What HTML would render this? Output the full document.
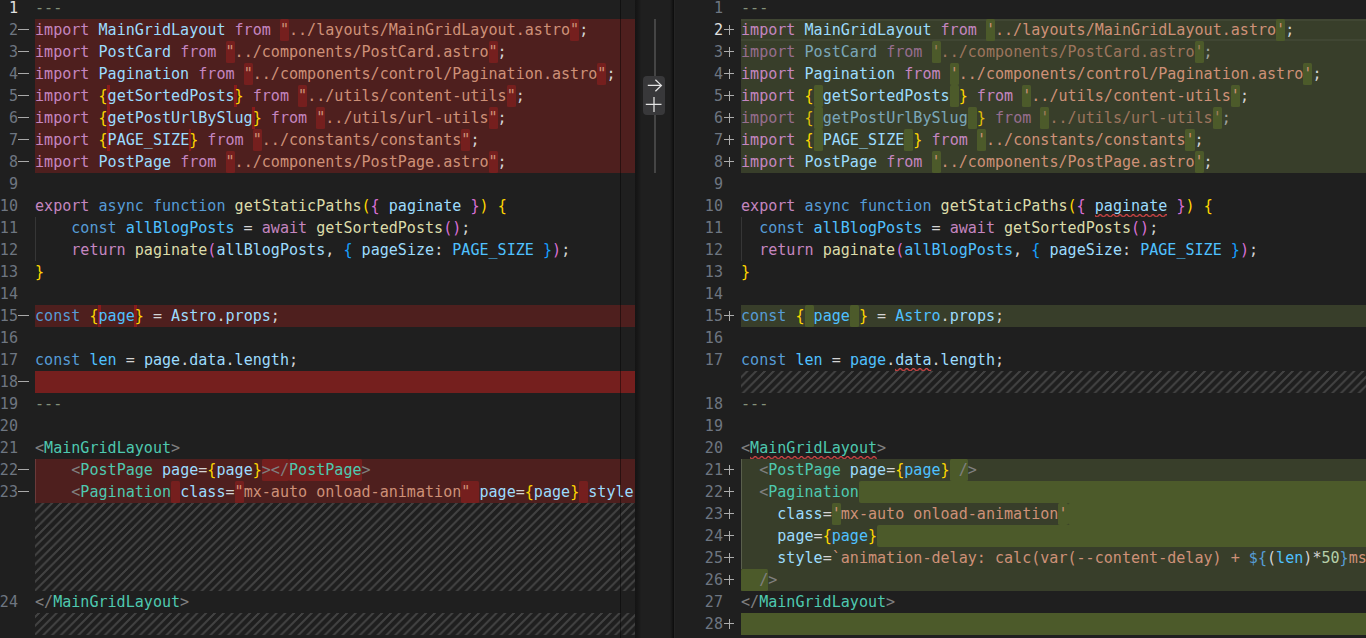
<!DOCTYPE html>
<html lang="en">
<head>
<meta charset="utf-8">
<title>Diff</title>
<style>
html,body{margin:0;padding:0;background:#1f1f1f;}
body{width:1366px;height:638px;overflow:hidden;position:relative;
 font-family:"DejaVu Sans Mono","Liberation Mono",monospace;font-size:15.07px;line-height:22px;color:#d4d4d4;}
.pane{position:absolute;top:0;height:638px;overflow:hidden;background:#1f1f1f;}
#left{left:0;width:635px;}
#right{left:674px;width:692px;}
.scroll{position:absolute;left:0;right:0;top:-3.3px;height:660px;}
.row{position:absolute;left:0;right:0;height:22px;}
.ln{position:absolute;top:0;height:22px;text-align:right;color:#6e7681;}
#left .ln{left:-10px;width:28px;}
#right .ln{left:9px;width:40px;}
.act .ln{color:#e0e0e0;}
.mk{position:absolute;top:0;height:22px;width:11px;font-size:0;}
#left .mk{left:18px;}
#right .mk{left:50px;}
.d .mk:before,.df .mk:before{content:"";position:absolute;left:0;top:10.5px;width:11px;height:1.2px;background:#a9a9a9;}
.a .mk:before,.af .mk:before{content:"";position:absolute;left:0;top:10.5px;width:10.2px;height:1.2px;background:#adadad;}
.a .mk:after,.af .mk:after{content:"";position:absolute;left:4.5px;top:6px;width:1.3px;height:10.2px;background:#adadad;}
.bg{position:absolute;top:0;bottom:0;right:0;}
#left .bg{left:35px;}
#right .bg{left:67px;}
.code{position:absolute;top:0;height:22px;white-space:pre;z-index:1;}
#left .code{left:35px;right:0;}
#right .code{left:67px;right:0;}
.guide{position:absolute;top:0;bottom:0;width:1px;background:#363636;}
#left .guide{left:35px;}
#right .guide{left:67px;}
.d .guide{background:#6a3a3a;}
.a .guide{background:#5a5f4c;}
.d .bg{background:#4e1f1e;}
.df .bg{background:#751f1e;}
.a .bg{background:#383e2a;}
.af .bg{background:#4c5a2a;}
.x .bg{background-color:#1f1f1f;background-image:linear-gradient(-45deg,rgba(204,204,204,.2) 15%,transparent 15%,transparent 50%,rgba(204,204,204,.2) 50%,rgba(204,204,204,.2) 65%,transparent 65%,transparent 100%);background-size:8.8px 8.8px;}
b.h{font-weight:normal;display:inline-block;height:22px;vertical-align:top;border-radius:1.5px;}
.d b.h{background:#751f1e;}
.a b.h{background:#4c5a2a;}
b.eol{width:1400px;border-radius:2px 0 0 2px;}
i.e{display:inline-block;width:0;height:22px;vertical-align:top;position:relative;}
i.e:before{content:"";z-index:-1;position:absolute;left:-0.4px;top:0;width:2.6px;height:22px;background:#8a1b1b;}
u.sq{text-decoration:none;}
.dim .code span{opacity:.667;}
.dim .code span.Y{opacity:.85;}
.K{color:#c586c0}.B{color:#569cd6}.V{color:#9cdcfe}.C{color:#4fc1ff}.F{color:#dcdcaa}.S{color:#ce9178}
.P{color:#d4d4d4}.T{color:#4ec9b0}.G{color:#808080}.M{color:#84917a}.N{color:#b5cea8}
.Y{color:#ffd700}.O{color:#da70d6}.L{color:#179fff}
#gutter{position:absolute;left:635px;top:0;width:39px;height:638px;background:linear-gradient(90deg,#141414 0,#161616 2px,#1f1f1f 6.5px,#1f1f1f 35px,#171717 37px,#0e0e0e 38.4px,#0e0e0e 39px);}
.gline{position:absolute;left:19px;top:18.7px;width:2px;height:154px;background:#454545;}
.gbtn{position:absolute;left:8px;top:76px;width:22px;height:39px;border-radius:4px;background:#38383a;}
.gbtn svg{position:absolute;left:0;top:0;}
.vline{z-index:5;position:absolute;left:620px;top:0;width:1px;height:638px;background:rgba(0,0,0,.45);}
#right:before{content:"";position:absolute;left:0;top:0;width:1px;height:638px;background:#242424;z-index:3;}
svg.sqs{position:absolute;left:0;bottom:-0.4px;width:100%;height:3.3px;overflow:hidden;}
u.sq{position:relative;display:inline-block;height:22px;vertical-align:top;}
#right .act .bg{box-shadow:inset 0 2px 0 rgba(255,255,255,.045),inset 0 -2px 0 rgba(255,255,255,.045);}
.zz{z-index:2;}

</style>
</head>
<body>
<svg width="0" height="0" style="position:absolute"><defs><pattern id="sqp" width="6.6" height="3.3" patternUnits="userSpaceOnUse"><g fill="#f14c4c" transform="scale(1.1)"><polygon points="5.5,0 2.5,3 1.1,3 4.1,0"/><polygon points="4,0 6,2 6,0.6 5.4,0"/><polygon points="0,2 1,3 2.4,3 0,0.6"/></g></pattern></defs></svg>
<div class="pane" id="left"><div class="scroll">
<div class="row act" style="top:0px"><span class="ln">1</span><span class="mk"></span><div class="bg"></div><div class="code"><span class="M">---</span></div></div>
<div class="row d" style="top:22px"><span class="ln">2</span><span class="mk">−</span><div class="bg"></div><div class="code"><span class="K">import</span> <span class="V">MainGridLayout</span> <span class="K">from</span> <b class="h"><span class="S">"</span></b><span class="S">../layouts/MainGridLayout.astro</span><b class="h"><span class="S">"</span></b><span class="P">;</span></div></div>
<div class="row d" style="top:44px"><span class="ln">3</span><span class="mk">−</span><div class="bg"></div><div class="code"><span class="K">import</span> <span class="V">PostCard</span> <span class="K">from</span> <b class="h"><span class="S">"</span></b><span class="S">../components/PostCard.astro</span><b class="h"><span class="S">"</span></b><span class="P">;</span></div></div>
<div class="row d" style="top:66px"><span class="ln">4</span><span class="mk">−</span><div class="bg"></div><div class="code"><span class="K">import</span> <span class="V">Pagination</span> <span class="K">from</span> <b class="h"><span class="S">"</span></b><span class="S">../components/control/Pagination.astro</span><b class="h"><span class="S">"</span></b><span class="P">;</span></div></div>
<div class="row d" style="top:88px"><span class="ln">5</span><span class="mk">−</span><div class="bg"></div><div class="code"><span class="K">import</span> <span class="Y">{</span><i class="e"></i><span class="V">getSortedPosts</span><i class="e"></i><span class="Y">}</span> <span class="K">from</span> <b class="h"><span class="S">"</span></b><span class="S">../utils/content-utils</span><b class="h"><span class="S">"</span></b><span class="P">;</span></div></div>
<div class="row d" style="top:110px"><span class="ln">6</span><span class="mk">−</span><div class="bg"></div><div class="code"><span class="K">import</span> <span class="Y">{</span><i class="e"></i><span class="V">getPostUrlBySlug</span><i class="e"></i><span class="Y">}</span> <span class="K">from</span> <b class="h"><span class="S">"</span></b><span class="S">../utils/url-utils</span><b class="h"><span class="S">"</span></b><span class="P">;</span></div></div>
<div class="row d" style="top:132px"><span class="ln">7</span><span class="mk">−</span><div class="bg"></div><div class="code"><span class="K">import</span> <span class="Y">{</span><i class="e"></i><span class="V">PAGE_SIZE</span><i class="e"></i><span class="Y">}</span> <span class="K">from</span> <b class="h"><span class="S">"</span></b><span class="S">../constants/constants</span><b class="h"><span class="S">"</span></b><span class="P">;</span></div></div>
<div class="row d" style="top:154px"><span class="ln">8</span><span class="mk">−</span><div class="bg"></div><div class="code"><span class="K">import</span> <span class="V">PostPage</span> <span class="K">from</span> <b class="h"><span class="S">"</span></b><span class="S">../components/PostPage.astro</span><b class="h"><span class="S">"</span></b><span class="P">;</span></div></div>
<div class="row" style="top:176px"><span class="ln">9</span><span class="mk"></span><div class="bg"></div></div>
<div class="row" style="top:198px"><span class="ln">10</span><span class="mk"></span><div class="bg"></div><div class="code"><span class="K">export</span> <span class="B">async</span> <span class="B">function</span> <span class="F">getStaticPaths</span><span class="Y">(</span><span class="O">{</span> <span class="V">paginate</span> <span class="O">}</span><span class="Y">)</span> <span class="Y">{</span></div></div>
<div class="row g0" style="top:220px"><span class="ln">11</span><span class="mk"></span><div class="bg"></div><div class="guide"></div><div class="code">    <span class="B">const</span> <span class="C">allBlogPosts</span> <span class="P">=</span> <span class="K">await</span> <span class="F">getSortedPosts</span><span class="O">()</span><span class="P">;</span></div></div>
<div class="row g0" style="top:242px"><span class="ln">12</span><span class="mk"></span><div class="bg"></div><div class="guide"></div><div class="code">    <span class="K">return</span> <span class="F">paginate</span><span class="O">(</span><span class="V">allBlogPosts</span><span class="P">,</span> <span class="L">{</span> <span class="V">pageSize</span><span class="P">:</span> <span class="C">PAGE_SIZE</span> <span class="L">}</span><span class="O">)</span><span class="P">;</span></div></div>
<div class="row" style="top:264px"><span class="ln">13</span><span class="mk"></span><div class="bg"></div><div class="code"><span class="Y">}</span></div></div>
<div class="row" style="top:286px"><span class="ln">14</span><span class="mk"></span><div class="bg"></div></div>
<div class="row d" style="top:308px"><span class="ln">15</span><span class="mk">−</span><div class="bg"></div><div class="code"><span class="B">const</span> <span class="Y">{</span><i class="e"></i><span class="C">page</span><i class="e"></i><span class="Y">}</span> <span class="P">=</span> <span class="V">Astro</span><span class="P">.</span><span class="V">props</span><span class="P">;</span></div></div>
<div class="row" style="top:330px"><span class="ln">16</span><span class="mk"></span><div class="bg"></div></div>
<div class="row" style="top:352px"><span class="ln">17</span><span class="mk"></span><div class="bg"></div><div class="code"><span class="B">const</span> <span class="C">len</span> <span class="P">=</span> <span class="V">page</span><span class="P">.</span><span class="V">data</span><span class="P">.</span><span class="V">length</span><span class="P">;</span></div></div>
<div class="row df" style="top:374px"><span class="ln">18</span><span class="mk">−</span><div class="bg"></div></div>
<div class="row" style="top:396px"><span class="ln">19</span><span class="mk"></span><div class="bg"></div><div class="code"><span class="M">---</span></div></div>
<div class="row" style="top:418px"><span class="ln">20</span><span class="mk"></span><div class="bg"></div></div>
<div class="row" style="top:440px"><span class="ln">21</span><span class="mk"></span><div class="bg"></div><div class="code"><span class="G">&lt;</span><span class="T">MainGridLayout</span><span class="G">&gt;</span></div></div>
<div class="row d g0" style="top:462px"><span class="ln">22</span><span class="mk">−</span><div class="bg"></div><div class="guide"></div><div class="code">    <span class="G">&lt;</span><span class="T">PostPage</span> <span class="V">page</span><span class="P">=</span><span class="Y">{</span><span class="V">page</span><span class="Y">}</span><b class="h"><span class="G">&gt;&lt;/</span></b><b class="h"><span class="T">PostPage</span></b><span class="G">&gt;</span></div></div>
<div class="row d g0" style="top:484px"><span class="ln">23</span><span class="mk">−</span><div class="bg"></div><div class="guide"></div><div class="code">    <span class="G">&lt;</span><span class="T">Pagination</span><b class="h"> </b><span class="V">class</span><span class="P">=</span><b class="h"><span class="S">"</span></b><span class="S">mx-auto onload-animation</span><b class="h"><span class="S">" </span></b><span class="V">page</span><span class="P">=</span><span class="Y">{</span><span class="V">page</span><span class="Y">}</span><b class="h"> </b><span class="V">style</span></div></div>
<div class="row x" style="top:506px"><div class="bg" style="background-position:0.6px 0"></div></div>
<div class="row x" style="top:528px"><div class="bg" style="background-position:5.0px 0"></div></div>
<div class="row x" style="top:550px"><div class="bg" style="background-position:0.6px 0"></div></div>
<div class="row x" style="top:572px"><div class="bg" style="background-position:5.0px 0"></div></div>
<div class="row" style="top:594px"><span class="ln">24</span><span class="mk"></span><div class="bg"></div><div class="code"><span class="G">&lt;/</span><span class="T">MainGridLayout</span><span class="G">&gt;</span></div></div>
<div class="row x" style="top:616px"><div class="bg" style="background-position:5.0px 0"></div></div>
</div><div class="vline"></div></div>
<div id="gutter"><div class="gline"></div><div class="gbtn"><svg width="22" height="39" viewBox="0 0 22 39" fill="none" stroke="#e4e4e4" stroke-width="1.25"><path d="M4.8 9.4H18.3M12.4 3.8L18.4 9.4L12.4 15.2"/><path d="M2.8 28.3H18.5M11 21V36"/></svg></div></div>
<div class="pane" id="right"><div class="scroll">
<div class="row" style="top:0px"><span class="ln">1</span><span class="mk"></span><div class="bg"></div><div class="code"><span class="M">---</span></div></div>
<div class="row a act" style="top:22px"><span class="ln">2</span><span class="mk">+</span><div class="bg"></div><div class="code"><span class="K">import</span> <span class="V">MainGridLayout</span> <span class="K">from</span> <b class="h"><span class="S">'</span></b><span class="S">../layouts/MainGridLayout.astro</span><b class="h"><span class="S">'</span></b><span class="P">;</span></div></div>
<div class="row a  dim" style="top:44px"><span class="ln">3</span><span class="mk">+</span><div class="bg"></div><div class="code"><span class="K">import</span> <span class="V">PostCard</span> <span class="K">from</span> <b class="h"><span class="S">'</span></b><span class="S">../components/PostCard.astro</span><b class="h"><span class="S">'</span></b><span class="P">;</span></div></div>
<div class="row a" style="top:66px"><span class="ln">4</span><span class="mk">+</span><div class="bg"></div><div class="code"><span class="K">import</span> <span class="V">Pagination</span> <span class="K">from</span> <b class="h"><span class="S">'</span></b><span class="S">../components/control/Pagination.astro</span><b class="h"><span class="S">'</span></b><span class="P">;</span></div></div>
<div class="row a" style="top:88px"><span class="ln">5</span><span class="mk">+</span><div class="bg"></div><div class="code"><span class="K">import</span> <span class="Y">{</span><b class="h"> </b><span class="V">getSortedPosts</span><b class="h"> </b><span class="Y">}</span> <span class="K">from</span> <b class="h"><span class="S">'</span></b><span class="S">../utils/content-utils</span><b class="h"><span class="S">'</span></b><span class="P">;</span></div></div>
<div class="row a  dim" style="top:110px"><span class="ln">6</span><span class="mk">+</span><div class="bg"></div><div class="code"><span class="K">import</span> <span class="Y">{</span><b class="h"> </b><span class="V">getPostUrlBySlug</span><b class="h"> </b><span class="Y">}</span> <span class="K">from</span> <b class="h"><span class="S">'</span></b><span class="S">../utils/url-utils</span><b class="h"><span class="S">'</span></b><span class="P">;</span></div></div>
<div class="row a" style="top:132px"><span class="ln">7</span><span class="mk">+</span><div class="bg"></div><div class="code"><span class="K">import</span> <span class="Y">{</span><b class="h"> </b><span class="V">PAGE_SIZE</span><b class="h"> </b><span class="Y">}</span> <span class="K">from</span> <b class="h"><span class="S">'</span></b><span class="S">../constants/constants</span><b class="h"><span class="S">'</span></b><span class="P">;</span></div></div>
<div class="row a" style="top:154px"><span class="ln">8</span><span class="mk">+</span><div class="bg"></div><div class="code"><span class="K">import</span> <span class="V">PostPage</span> <span class="K">from</span> <b class="h"><span class="S">'</span></b><span class="S">../components/PostPage.astro</span><b class="h"><span class="S">'</span></b><span class="P">;</span></div></div>
<div class="row" style="top:176px"><span class="ln">9</span><span class="mk"></span><div class="bg"></div></div>
<div class="row zz" style="top:198px"><span class="ln">10</span><span class="mk"></span><div class="bg"></div><div class="code"><span class="K">export</span> <span class="B">async</span> <span class="B">function</span> <span class="F">getStaticPaths</span><span class="Y">(</span><span class="O">{</span> <u class="sq"><span class="V">paginate</span><svg class="sqs"><rect width="100%" height="3.3" fill="url(#sqp)"/></svg></u> <span class="O">}</span><span class="Y">)</span> <span class="Y">{</span></div></div>
<div class="row g0" style="top:220px"><span class="ln">11</span><span class="mk"></span><div class="bg"></div><div class="guide"></div><div class="code">  <span class="B">const</span> <span class="C">allBlogPosts</span> <span class="P">=</span> <span class="K">await</span> <span class="F">getSortedPosts</span><span class="O">()</span><span class="P">;</span></div></div>
<div class="row g0" style="top:242px"><span class="ln">12</span><span class="mk"></span><div class="bg"></div><div class="guide"></div><div class="code">  <span class="K">return</span> <span class="F">paginate</span><span class="O">(</span><span class="C">allBlogPosts</span><span class="P">,</span> <span class="L">{</span> <span class="V">pageSize</span><span class="P">:</span> <span class="C">PAGE_SIZE</span> <span class="L">}</span><span class="O">)</span><span class="P">;</span></div></div>
<div class="row" style="top:264px"><span class="ln">13</span><span class="mk"></span><div class="bg"></div><div class="code"><span class="Y">}</span></div></div>
<div class="row" style="top:286px"><span class="ln">14</span><span class="mk"></span><div class="bg"></div></div>
<div class="row a" style="top:308px"><span class="ln">15</span><span class="mk">+</span><div class="bg"></div><div class="code"><span class="B">const</span> <span class="Y">{</span><b class="h"> </b><span class="C">page</span><b class="h"> </b><span class="Y">}</span> <span class="P">=</span> <span class="C">Astro</span><span class="P">.</span><span class="V">props</span><span class="P">;</span></div></div>
<div class="row" style="top:330px"><span class="ln">16</span><span class="mk"></span><div class="bg"></div></div>
<div class="row zz" style="top:352px"><span class="ln">17</span><span class="mk"></span><div class="bg"></div><div class="code"><span class="B">const</span> <span class="C">len</span> <span class="P">=</span> <span class="C">page</span><span class="P">.</span><u class="sq"><span class="V">data</span><svg class="sqs"><rect width="100%" height="3.3" fill="url(#sqp)"/></svg></u><span class="P">.</span><span class="V">length</span><span class="P">;</span></div></div>
<div class="row x" style="top:374px"><div class="bg" style="background-position:7.4px 0"></div></div>
<div class="row" style="top:396px"><span class="ln">18</span><span class="mk"></span><div class="bg"></div><div class="code"><span class="M">---</span></div></div>
<div class="row" style="top:418px"><span class="ln">19</span><span class="mk"></span><div class="bg"></div></div>
<div class="row zz" style="top:440px"><span class="ln">20</span><span class="mk"></span><div class="bg"></div><div class="code"><span class="G">&lt;</span><u class="sq"><span class="T">MainGridLayout</span><svg class="sqs"><rect width="100%" height="3.3" fill="url(#sqp)"/></svg></u><span class="G">&gt;</span></div></div>
<div class="row a g0" style="top:462px"><span class="ln">21</span><span class="mk">+</span><div class="bg"></div><div class="guide"></div><div class="code">  <span class="G">&lt;</span><span class="T">PostPage</span> <span class="V">page</span><span class="P">=</span><span class="Y">{</span><span class="C">page</span><span class="Y">}</span><b class="h"><span class="G"> /</span></b><span class="G">&gt;</span></div></div>
<div class="row a g0" style="top:484px"><span class="ln">22</span><span class="mk">+</span><div class="bg"></div><div class="guide"></div><div class="code">  <span class="G">&lt;</span><span class="T">Pagination</span><b class="h eol"></b></div></div>
<div class="row a g0" style="top:506px"><span class="ln">23</span><span class="mk">+</span><div class="bg"></div><div class="guide"></div><div class="code">    <span class="V">class</span><span class="P">=</span><b class="h"><span class="S">'</span></b><span class="S">mx-auto onload-animation</span><b class="h"><span class="S">'</span></b><b class="h eol"></b></div></div>
<div class="row a g0" style="top:528px"><span class="ln">24</span><span class="mk">+</span><div class="bg"></div><div class="guide"></div><div class="code">    <span class="V">page</span><span class="P">=</span><span class="Y">{</span><span class="C">page</span><span class="Y">}</span><b class="h eol"></b></div></div>
<div class="row a g0" style="top:550px"><span class="ln">25</span><span class="mk">+</span><div class="bg"></div><div class="guide"></div><div class="code">    <span class="V">style</span><span class="P">=</span><span class="S">`animation-delay: calc(var(--content-delay) + </span><span class="B">${</span><span class="P">(</span><span class="C">len</span><span class="P">)</span><span class="P">*</span><span class="N">50</span><span class="B">}</span><span class="S">ms</span></div></div>
<div class="row a" style="top:572px"><span class="ln">26</span><span class="mk">+</span><div class="bg"></div><div class="code"><b class="h"><span class="G">  /</span></b><span class="G">&gt;</span></div></div>
<div class="row" style="top:594px"><span class="ln">27</span><span class="mk"></span><div class="bg"></div><div class="code"><span class="G">&lt;/</span><span class="T">MainGridLayout</span><span class="G">&gt;</span></div></div>
<div class="row af" style="top:616px"><span class="ln">28</span><span class="mk">+</span><div class="bg"></div></div>
</div></div>
</body>
</html>
